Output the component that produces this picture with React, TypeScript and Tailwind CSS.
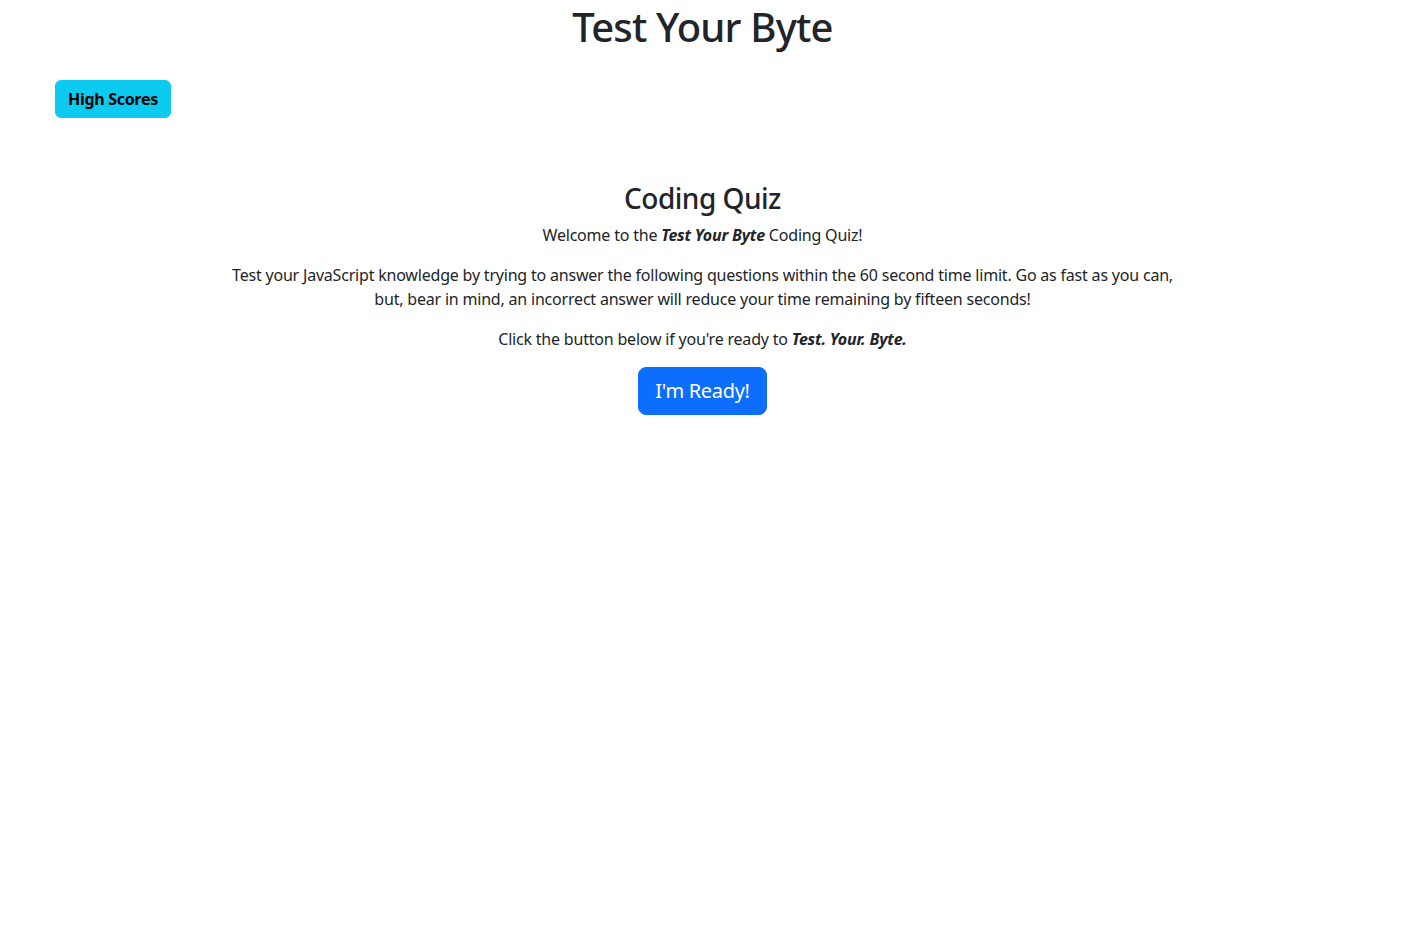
export default function App() {
  return (
    <div className="min-h-screen bg-white text-[#212529] font-['Noto_Sans','Open_Sans',sans-serif]">
      <h1 className="text-center text-[40px] leading-[48px] font-medium pt-[3px] tracking-[-0.8px]">Test Your Byte</h1>

      <div className="px-[55px] mt-[29px]">
        <button className="bg-[#0dcaf0] text-black font-bold text-[16px] leading-[24px] px-[12px] py-[6px] border border-[#0dcaf0] rounded-[6px] tracking-[-0.3px]">
          High Scores
        </button>
      </div>

      <main className="mx-auto max-w-[960px] text-center mt-[63px] text-[16px] leading-[24px] tracking-[-0.2px]">
        <h2 className="text-[28px] leading-[34px] font-medium mb-[8px] tracking-[-0.5px]">Coding Quiz</h2>
        <p className="mb-[16px]">
          Welcome to the <strong className="italic font-bold">Test Your Byte</strong> Coding Quiz!
        </p>
        <p className="mb-[16px]">
          Test your JavaScript knowledge by trying to answer the following questions within the 60 second time limit. Go as fast as you can, but, bear in mind, an incorrect answer will reduce your time remaining by fifteen seconds!
        </p>
        <p className="mb-[16px]">
          Click the button below if you're ready to <strong className="italic font-bold">Test. Your. Byte.</strong>
        </p>
        <button className="bg-[#0d6efd] text-white text-[20px] leading-[30px] px-[16px] py-[8px] border border-[#0d6efd] rounded-[8px] tracking-[-0.3px]">
          I'm Ready!
        </button>
      </main>
    </div>
  );
}
